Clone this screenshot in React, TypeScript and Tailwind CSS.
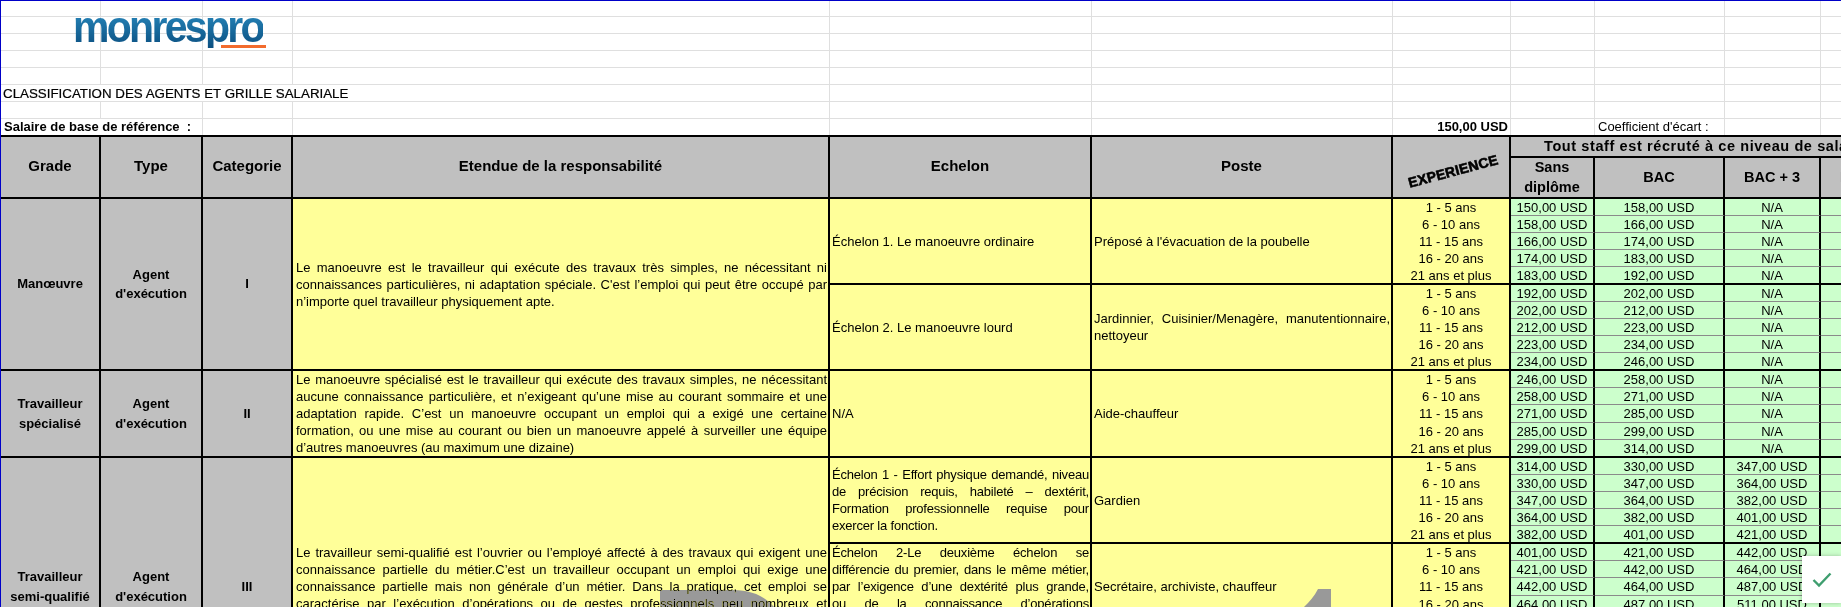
import React from "react";

const J = ({ children }: { children: React.ReactNode }) => (
  <span className="block [text-align-last:justify]">{children}</span>
);
const L = ({ children }: { children: React.ReactNode }) => <span className="block">{children}</span>;

const exp = ["1 - 5 ans", "6 - 10 ans", "11 - 15 ans", "16 - 20 ans", "21 ans et plus"];
const grey = "bg-[#c0c0c0] border-r-2 border-b-2 border-black text-center align-middle font-bold p-0";
const yellow = "bg-[#ffff99] border-r-2 border-b-2 border-black align-middle p-0 pl-[2px] pr-[1px] leading-[17px]";
const yellowDesc = "bg-[#ffff99] border-r-2 border-b-2 border-black align-middle p-0 pl-[3px] pr-[1px] leading-[17px]";
const hdr = "bg-[#c0c0c0] border-t-2 border-r-2 border-b-2 border-black text-center align-middle font-bold p-0 pb-[2px] text-[15px]";
const sub = "bg-[#c0c0c0] border-r-2 border-b-2 border-black text-center align-middle font-bold p-0 text-[14.5px] leading-[19.5px]";
const grid = "border-r border-b border-[#dfdfdf] p-0";

type Block = {
  echelon: React.ReactNode;
  poste: React.ReactNode;
  a: (number | string)[];
  b: (number | string)[];
  c: (number | string)[];
  left?: { rows: number; grade: React.ReactNode; cat: string; desc: React.ReactNode };
};

const blocks: Block[] = [
  {
    echelon: "Échelon 1. Le manoeuvre ordinaire",
    poste: "Préposé à l'évacuation de la poubelle",
    a: [150, 158, 166, 174, 183],
    b: [158, 166, 174, 183, 192],
    c: ["N/A", "N/A", "N/A", "N/A", "N/A"],
    left: {
      rows: 10,
      grade: "Manœuvre",
      cat: "I",
      desc: (
        <>
          <J>Le manoeuvre est le travailleur qui exécute des travaux très simples, ne nécessitant ni</J>
          <J>connaissances particulières, ni adaptation spéciale. C'est l’emploi qui peut être occupé par</J>
          <L>n’importe quel travailleur physiquement apte.</L>
        </>
      ),
    },
  },
  {
    echelon: "Échelon 2. Le manoeuvre lourd",
    poste: (
      <>
        <J>Jardinnier, Cuisinier/Menagère, manutentionnaire,</J>
        <L>nettoyeur</L>
      </>
    ),
    a: [192, 202, 212, 223, 234],
    b: [202, 212, 223, 234, 246],
    c: ["N/A", "N/A", "N/A", "N/A", "N/A"],
  },
  {
    echelon: "N/A",
    poste: "Aide-chauffeur",
    a: [246, 258, 271, 285, 299],
    b: [258, 271, 285, 299, 314],
    c: ["N/A", "N/A", "N/A", "N/A", "N/A"],
    left: {
      rows: 5,
      grade: (
        <>
          Travailleur
          <br />
          spécialisé
        </>
      ),
      cat: "II",
      desc: (
        <>
          <J>Le manoeuvre spécialisé est le travailleur qui exécute des travaux simples, ne nécessitant</J>
          <J>aucune connaissance particulière, et n’exigeant qu’une mise au courant sommaire et une</J>
          <J>adaptation rapide. C’est un manoeuvre occupant un emploi qui a exigé une certaine</J>
          <J>formation, ou une mise au courant ou bien un manoeuvre appelé à surveiller une équipe</J>
          <L>d’autres manoeuvres (au maximum une dizaine)</L>
        </>
      ),
    },
  },
  {
    echelon: (
      <div className="tracking-[-0.2px]">
        <J>Échelon 1 - Effort physique demandé, niveau</J>
        <J>de précision requis, habileté – dextérit,</J>
        <J>Formation professionnelle requise pour</J>
        <L>exercer la fonction.</L>
      </div>
    ),
    poste: "Gardien",
    a: [314, 330, 347, 364, 382],
    b: [330, 347, 364, 382, 401],
    c: [347, 364, 382, 401, 421],
    left: {
      rows: 15,
      grade: (
        <>
          Travailleur
          <br />
          semi-qualifié
        </>
      ),
      cat: "III",
      desc: (
        <>
          <J>Le travailleur semi-qualifié est l’ouvrier ou l’employé affecté à des travaux qui exigent une</J>
          <J>connaissance partielle du métier.C’est un travailleur occupant un emploi qui exige une</J>
          <J>connaissance partielle mais non générale d’un métier. Dans la pratique, cet emploi se</J>
          <J>caractérise par l’exécution d’opérations ou de gestes professionnels peu nombreux et</J>
          <L>&nbsp;</L>
        </>
      ),
    },
  },
  {
    echelon: (
      <div className="tracking-[-0.2px]">
        <J>Échelon 2-Le deuxième échelon se</J>
        <J>différencie du premier, dans le même métier,</J>
        <J>par l’exigence d’une dextérité plus grande,</J>
        <J>ou de la connaissance d’opérations</J>
        <L>&nbsp;</L>
      </div>
    ),
    poste: "Secrétaire, archiviste, chauffeur",
    a: [401, 421, 442, 464, ""],
    b: [421, 442, 464, 487, ""],
    c: [442, 464, 487, 511, ""],
  },
  { echelon: "", poste: "", a: ["", "", "", "", ""], b: ["", "", "", "", ""], c: ["", "", "", "", ""] },
];

const fmt = (v: number | string) => (typeof v === "number" ? `${v},00 USD` : v);

function GreenCell({ v, last }: { v: number | string; last: boolean }) {
  return (
    <td
      className={`bg-[#ccffcc] border-r-2 border-black p-0 pt-[2px] text-center align-middle leading-[14px] whitespace-nowrap ${
        last ? "border-b-2" : "border-b [border-bottom-color:#8a8a8a]"
      }`}
    >
      {fmt(v)}
    </td>
  );
}

export default function App() {
  return (
    <div className="relative w-[1841px] h-[607px] overflow-hidden bg-white border-t border-l border-[#0000c8] font-['Liberation_Sans',Arial,sans-serif] text-[13px] text-black">
      <table className="table-fixed border-separate border-spacing-0 w-[1916px]">
        <colgroup>
          <col className="w-[100px]" />
          <col className="w-[102px]" />
          <col className="w-[90px]" />
          <col className="w-[537px]" />
          <col className="w-[262px]" />
          <col className="w-[301px]" />
          <col className="w-[118px]" />
          <col className="w-[84px]" />
          <col className="w-[130px]" />
          <col className="w-[96px]" />
          <col className="w-[96px]" />
        </colgroup>
        <tbody>
          {[16, 17, 17, 17, 17].map((h, r) => (
            <tr key={r} style={{ height: h }}>
              {Array.from({ length: 11 }).map((_, c) => (
                <td key={c} className={grid} />
              ))}
            </tr>
          ))}
          <tr className="h-[17px]">
            <td colSpan={4} className={`${grid} pl-[2px] pt-[2px] leading-[14px] text-[13.33px] whitespace-nowrap [-webkit-text-stroke:0.2px_black]`}>
              CLASSIFICATION DES AGENTS ET GRILLE SALARIALE
            </td>
            {Array.from({ length: 7 }).map((_, c) => (
              <td key={c} className={grid} />
            ))}
          </tr>
          <tr className="h-[17px]">
            {Array.from({ length: 11 }).map((_, c) => (
              <td key={c} className={grid} />
            ))}
          </tr>
          <tr className="h-[16px]">
            <td colSpan={2} className="border-r border-[#dfdfdf] p-0 pl-[3px] leading-[16px] font-bold whitespace-nowrap">
              Salaire de base de référence&nbsp; :
            </td>
            {Array.from({ length: 4 }).map((_, c) => (
              <td key={c} className="border-r border-[#dfdfdf] p-0" />
            ))}
            <td className="border-r border-[#dfdfdf] p-0 pr-[2px] text-right leading-[16px] font-bold">150,00 USD</td>
            <td className="border-r border-[#dfdfdf] p-0" />
            <td className="border-r border-[#dfdfdf] p-0 pl-[3px] leading-[16px] whitespace-nowrap">Coefficient d'écart :</td>
            <td className="border-r border-[#dfdfdf] p-0" />
            <td className="p-0" />
          </tr>
          <tr className="h-[23px]">
            <td rowSpan={2} className={hdr}>Grade</td>
            <td rowSpan={2} className={hdr}>Type</td>
            <td rowSpan={2} className={hdr}>Categorie</td>
            <td rowSpan={2} className={hdr}>Etendue de la responsabilité</td>
            <td rowSpan={2} className={hdr}>Echelon</td>
            <td rowSpan={2} className={hdr}>Poste</td>
            <td rowSpan={2} className="bg-[#c0c0c0] border-t-2 border-r-2 border-b-2 border-black text-center align-middle font-bold p-0">
              <span className="inline-block rotate-[-15deg] translate-x-[2px] translate-y-[4px] text-[14px] tracking-[0.2px] [-webkit-text-stroke:0.6px_black]">
                EXPERIENCE
              </span>
            </td>
            <td colSpan={4} className="bg-[#c0c0c0] border-t-2 border-b-2 border-black p-0 pl-[33px] align-middle font-bold text-[14.5px] tracking-[0.6px] leading-[17px] whitespace-nowrap">
              Tout staff est récruté à ce niveau de salaire
            </td>
          </tr>
          <tr className="h-[41px]">
            <td className={sub}>
              Sans
              <br />
              diplôme
            </td>
            <td className={sub}>BAC</td>
            <td className={sub}>BAC + 3</td>
            <td className={`${sub} whitespace-nowrap`}>BAC + 5</td>
          </tr>
          {blocks.map((b, bi) =>
            exp.map((e, i) => (
              <tr key={`${bi}-${i}`} style={{ height: i === 4 ? 18 : 17 }}>
                {i === 0 && b.left && (
                  <>
                    <td rowSpan={b.left.rows} className={grey}>{b.left.grade}</td>
                    <td rowSpan={b.left.rows} className={grey}>
                      Agent
                      <br />
                      d'exécution
                    </td>
                    <td rowSpan={b.left.rows} className={grey}>{b.left.cat}</td>
                    <td rowSpan={b.left.rows} className={yellowDesc}>{b.left.desc}</td>
                  </>
                )}
                {i === 0 && <td rowSpan={5} className={yellow}>{b.echelon}</td>}
                {i === 0 && <td rowSpan={5} className={yellow}>{b.poste}</td>}
                <td
                  className={`bg-[#ffff99] border-r-2 border-black p-0 pt-[2px] text-center align-middle leading-[14px] whitespace-nowrap ${
                    i === 4 ? "border-b-2" : "pb-[1px]"
                  }`}
                >
                  {bi < 5 && !(bi === 4 && i === 4) ? e : ""}
                </td>
                <GreenCell v={b.a[i]} last={i === 4} />
                <GreenCell v={b.b[i]} last={i === 4} />
                <GreenCell v={b.c[i]} last={i === 4} />
                <GreenCell v="" last={i === 4} />
              </tr>
            ))
          )}
        </tbody>
      </table>

      <div className="absolute left-[72px] top-[5px] h-[40px] origin-top scale-y-[1.06] text-[41px] leading-[41px] font-bold tracking-[-2.7px] overflow-hidden bg-gradient-to-b from-[#2b8fc4] to-[#0b4f80] bg-clip-text text-transparent">
        monrespro
      </div>
      <div className="absolute left-[220px] top-[44px] w-[45px] h-[3px] bg-[#f26b2d]" />

      <svg className="absolute left-[659px] top-[589px] mix-blend-darken pointer-events-none" width="120" height="18" viewBox="0 0 120 18">
        <path d="M0 0 H68 C88 0 102 3 115 18 H0 Z" fill="#999999" />
      </svg>
      <svg className="absolute left-[1302px] top-[588px] mix-blend-darken pointer-events-none" width="30" height="19" viewBox="0 0 30 19">
        <path d="M15 0 H28 V19 H0 C6 13 11 8 15 0 Z" fill="#999999" />
      </svg>

      <div className="absolute right-0 top-[555px] w-[39px] h-[47px] bg-white shadow-[0_0_4px_rgba(0,0,0,0.25)] flex items-center justify-center">
        <svg width="20" height="16" viewBox="0 0 20 16" fill="none" className="ml-[1px]">
          <path d="M1.5 8 L7 13.5 L18.5 1.5" stroke="#3f9e6f" strokeWidth="2.4" />
        </svg>
      </div>
    </div>
  );
}
